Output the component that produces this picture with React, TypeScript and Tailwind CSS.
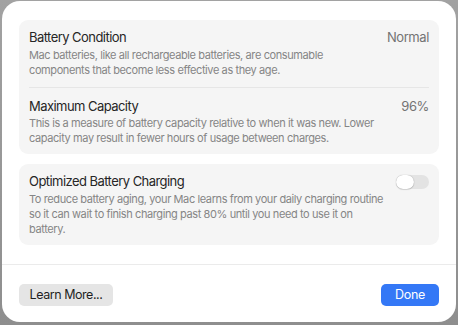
import { useState } from "react";

const font = { fontFamily: "Inter, 'Noto Sans', sans-serif" };

interface RowProps {
  title: string;
  value?: string;
  lines: string[];
  toggle?: boolean;
}

const Toggle = ({ on, onChange }: { on: boolean; onChange: () => void }) => (
  <button
    onClick={onChange}
    className={`relative h-[14px] w-[33px] rounded-full ${on ? "bg-[#3478f6]" : "bg-[#e3e3e3]"}`}
  >
    <span
      className={`absolute top-0 h-[14px] w-[18px] rounded-full bg-white shadow-[0_0_1px_rgba(0,0,0,0.35),0_1px_1px_rgba(0,0,0,0.12)] ${on ? "right-0" : "left-0"}`}
    />
  </button>
);

const Row = ({ title, value, lines, toggle }: RowProps) => {
  const [on, setOn] = useState(false);
  return (
    <div>
      <div className="flex items-start justify-between">
        <span className="text-[13px] leading-4 tracking-[-0.55px] text-[#262626]">{title}</span>
        {value && (
          <span className="text-[13px] leading-4 tracking-[-0.4px] text-[#737373]">{value}</span>
        )}
        {toggle && (
          <div className="mt-[2px] flex">
            <Toggle on={on} onChange={() => setOn(!on)} />
          </div>
        )}
      </div>
      <p className="mt-[2.5px] text-[11px] leading-[15px] tracking-[-0.4px] text-[#858585]">
        {lines.map((l, i) => (
          <span key={i} className="block">
            {l}
          </span>
        ))}
      </p>
    </div>
  );
};

export default function App() {
  return (
    <div
      className="h-[325px] w-[458px] bg-gradient-to-b from-[#a2a2a2] to-[#8e8e8e] pl-[2px] pt-[1px]"
      style={font}
    >
      <div className="flex h-[321px] w-[454px] flex-col rounded-[18px] bg-white">
        <div className="flex flex-col gap-[10px] px-[17px] pt-[19px]">
          <div className="rounded-[9px] bg-[#f5f5f5] px-[10px] pb-[8px] pt-[9px]">
            <Row
              title="Battery Condition"
              value="Normal"
              lines={[
                "Mac batteries, like all rechargeable batteries, are consumable",
                "components that become less effective as they age.",
              ]}
            />
            <div className="mb-[10px] mt-[9px] h-px bg-[#e6e6e6]" />
            <Row
              title="Maximum Capacity"
              value="96%"
              lines={[
                "This is a measure of battery capacity relative to when it was new. Lower",
                "capacity may result in fewer hours of usage between charges.",
              ]}
            />
          </div>
          <div className="rounded-[9px] bg-[#f5f5f5] px-[10px] pb-[8px] pt-[9px]">
            <Row
              title="Optimized Battery Charging"
              toggle
              lines={[
                "To reduce battery aging, your Mac learns from your daily charging routine",
                "so it can wait to finish charging past 80% until you need to use it on",
                "battery.",
              ]}
            />
          </div>
        </div>
        <div className="mt-auto h-px bg-[#ebebeb]" />
        <div className="flex items-center justify-between px-[17px] pb-[16px] pt-[19px]">
          <button className="h-[22px] w-[94px] rounded-[5px] bg-[#e5e5e5] text-[12.5px] tracking-[-0.45px] text-[#1f1f1f]">
            Learn More...
          </button>
          <button className="h-[22px] w-[58px] rounded-[5px] bg-[#3478f6] text-[12.5px] tracking-[-0.3px] text-white">
            Done
          </button>
        </div>
      </div>
    </div>
  );
}
